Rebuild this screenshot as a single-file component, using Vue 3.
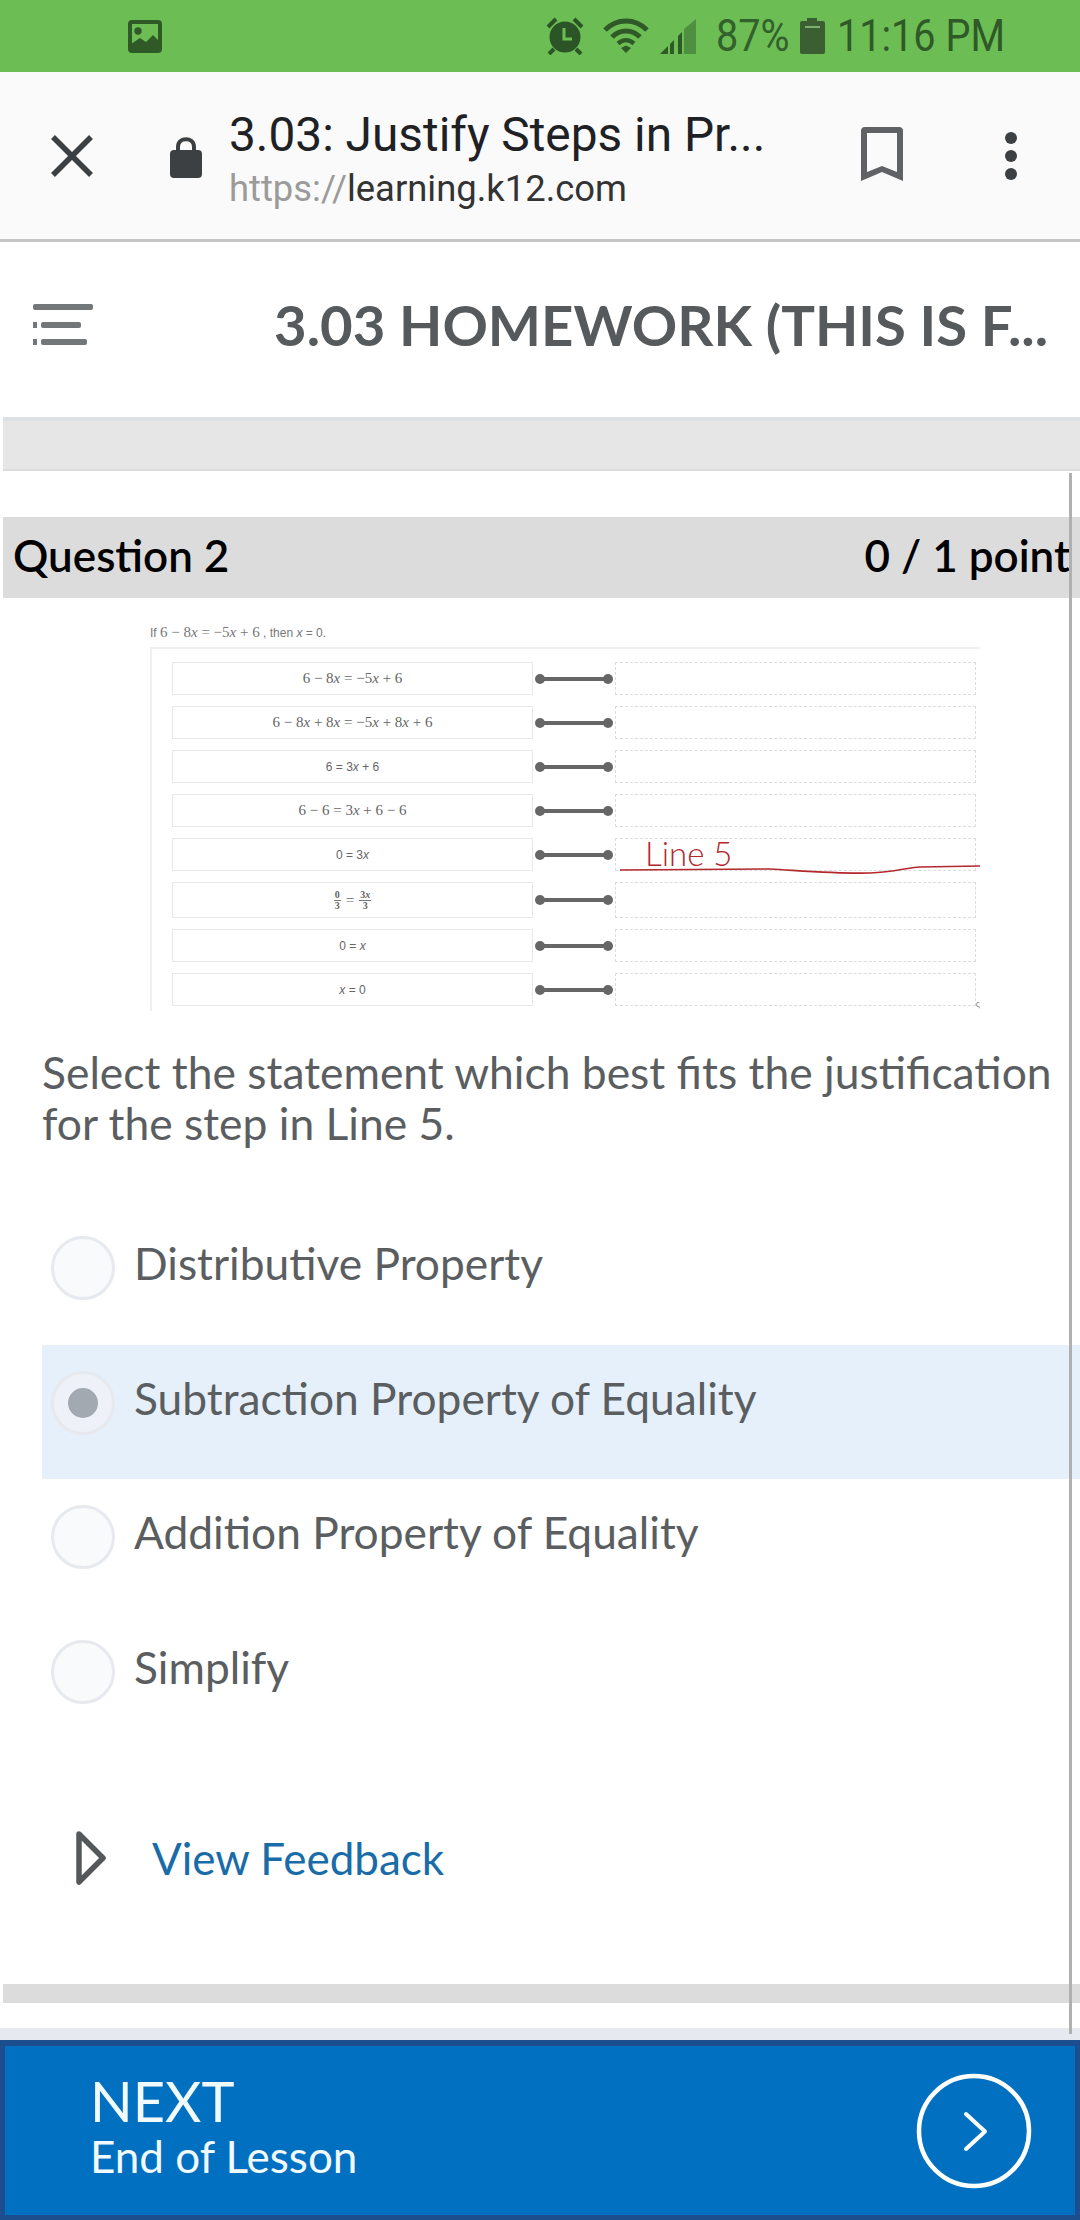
<script setup>
const rows = [
  { kind: 'math', text: '6 − 8x = −5x + 6' },
  { kind: 'math', text: '6 − 8x + 8x = −5x + 8x + 6' },
  { kind: 'plain', text: '6 = 3x + 6' },
  { kind: 'math', text: '6 − 6 = 3x + 6 − 6' },
  { kind: 'plain', text: '0 = 3x' },
  { kind: 'frac' },
  { kind: 'plain', text: '0 = x' },
  { kind: 'plain', text: 'x = 0' }
]

const options = [
  { label: 'Distributive Property', selected: false },
  { label: 'Subtraction Property of Equality', selected: true },
  { label: 'Addition Property of Equality', selected: false },
  { label: 'Simplify', selected: false }
]
</script>

<template>
  <div class="page">
    <div class="status">
      <svg width="34" height="33" viewBox="0 0 34 33">
        <rect x="2" y="2" width="30" height="29" rx="2" fill="none" stroke="#2f5a28" stroke-width="4" />
        <circle cx="10" cy="11" r="3.7" fill="#2f5a28" />
        <path d="M3 31 V24 L12 18 L18 22 L25 15 L31 21 V31 Z" fill="#2f5a28" />
      </svg>
      <div class="status-right">
        <svg width="38" height="38" viewBox="0 0 38 38">
          <circle cx="19" cy="20" r="15.5" fill="#2b5526" />
          <path d="M18 11 V22 H26" fill="none" stroke="#6dbd55" stroke-width="3" />
          <path d="M2 10 L10 2 M36 10 L28 2 M8 32 L3 37 M30 32 L35 37" stroke="#2b5526" stroke-width="4" />
        </svg>
        <svg class="ic-wifi" width="46" height="36" viewBox="0 0 46 36">
          <path d="M2 12 C14 0 32 0 44 12" fill="none" stroke="#2f5a28" stroke-width="5" />
          <path d="M9 19 C17 11 29 11 37 19" fill="none" stroke="#2f5a28" stroke-width="5" />
          <path d="M15 25.5 C20 21 26 21 31 25.5" fill="none" stroke="#2f5a28" stroke-width="4.5" />
          <path d="M18 30 L23 27.5 L28 30 L23 35 Z" fill="#2f5a28" />
        </svg>
        <svg class="ic-signal" width="36" height="36" viewBox="0 0 36 36">
          <path d="M24 11 L36 1 V36 H24 Z" fill="#4f8f40" />
          <path d="M0 36 L8 28 V36 Z" fill="#2f5a28" />
          <path d="M10 26 L14 22 V36 H10 Z" fill="#2f5a28" />
          <path d="M18 18 L22 14 V36 H18 Z" fill="#2f5a28" />
        </svg>
        <span class="pct">87%</span>
        <svg class="ic-battery" width="25" height="36" viewBox="0 0 25 36">
          <path d="M7 0 H17 V3 H23 Q25 3 25 5 V34 Q25 36 23 36 H2 Q0 36 0 34 V5 Q0 3 2 3 H7 Z" fill="#3b5f33" />
          <rect x="5" y="8" width="15" height="2" fill="#7fae72" />
        </svg>
        <span class="clock">11:16 PM</span>
      </div>
    </div>

    <div class="browser">
      <svg class="ic-close" width="42" height="42" viewBox="0 0 42 42">
        <path d="M2 2 L40 40 M40 2 L2 40" stroke="#3c4043" stroke-width="5.5" />
      </svg>
      <svg class="ic-lock" width="32" height="42" viewBox="0 0 32 42">
        <path d="M8 17 V11 C8 0.5 24 0.5 24 11 V17" fill="none" stroke="#3c4043" stroke-width="4" />
        <rect x="0" y="14" width="32" height="28" rx="4" fill="#3c4043" />
      </svg>
      <div class="browser-text">
        <div class="tab-title">3.03: Justify Steps in Pr...</div>
        <div class="tab-url"><span class="scheme">https://</span>learning.k12.com</div>
      </div>
      <svg class="ic-bookmark" width="42" height="54" viewBox="0 0 42 54">
        <path fill-rule="evenodd" d="M0 4 Q0 0 4 0 H38 Q42 0 42 4 V54 L21 45 L0 54 Z M6 6 V45 L21 39 L36 45 V6 Z" fill="#5f6164" />
      </svg>
      <div class="kebab"><i></i><i></i><i></i></div>
    </div>

    <div class="content">
      <header class="lesson-head">
        <svg class="ic-menu" width="60" height="42" viewBox="0 0 60 42">
          <rect x="0" y="0" width="60" height="6" rx="2" fill="#73777a" />
          <rect x="0" y="18" width="4" height="6" fill="#73777a" />
          <rect x="8" y="18" width="40" height="6" rx="2" fill="#73777a" />
          <rect x="0" y="35" width="4" height="6" fill="#73777a" />
          <rect x="8" y="35" width="46" height="6" rx="2" fill="#73777a" />
        </svg>
        <h1>3.03 HOMEWORK (THIS IS F...</h1>
      </header>
      <div class="band"></div>

      <div class="q-bar">
        <span>Question 2</span>
        <span>0 / 1 point</span>
      </div>

      <div class="figure">
        <p class="prompt">If <span class="cm">6 − 8<em>x</em> = −5<em>x</em> + 6</span> , then <em>x</em> = 0.</p>
        <div class="match">
          <div v-for="(row, i) in rows" :key="i" class="match-row" :class="{ tall: row.kind === 'frac' }">
            <div class="step">
              <span v-if="row.kind !== 'frac'" :class="{ cm: row.kind === 'math' }">
                <template v-for="(part, j) in row.text.split('x')" :key="j"><em v-if="j > 0">x</em>{{ part }}</template>
              </span>
              <span v-else class="cm frac-line">
                <span class="frac"><b>0</b><b>3</b></span>
                <span>=</span>
                <span class="frac"><b>3<em>x</em></b><b>3</b></span>
              </span>
            </div>
            <div class="link"><i></i><span></span><i></i></div>
            <div class="slot"></div>
          </div>
          <span class="corner">ς</span>
          <div class="note">
            <span class="note-text">Line 5</span>
            <svg width="360" height="12" viewBox="0 0 360 12">
              <path d="M0 8 L150 7 C185 9 220 12 250 11 C275 10 285 6 300 5 L360 4" fill="none" stroke="#b3282d" stroke-width="1.6" />
            </svg>
          </div>
        </div>
      </div>

      <p class="question">Select the statement which best fits the justification<br />for the step in Line 5.</p>

      <div class="options">
        <div v-for="opt in options" :key="opt.label" class="option" :class="{ selected: opt.selected }">
          <span class="radio"><i v-if="opt.selected"></i></span>
          <span class="opt-label">{{ opt.label }}</span>
        </div>
      </div>

      <div class="feedback">
        <svg width="30" height="54" viewBox="0 0 30 54">
          <path d="M3 3 L27 27 L3 51 Z" fill="none" stroke="#55585a" stroke-width="5.5" stroke-linejoin="round" />
        </svg>
        <a>View Feedback</a>
      </div>

      <div class="bottom-rule"></div>
    </div>

    <div class="pre-footer"></div>
    <footer class="next">
      <div class="next-text">
        <div class="next-title">NEXT</div>
        <div class="next-sub">End of Lesson</div>
      </div>
      <svg width="116" height="116" viewBox="0 0 116 116">
        <circle cx="58" cy="58" r="55" fill="none" stroke="#fff" stroke-width="4.5" />
        <path d="M50 41 L69 58.5 L50 76" fill="none" stroke="#fff" stroke-width="4" stroke-linecap="round" stroke-linejoin="round" />
      </svg>
    </footer>

    <div class="scrollbar"></div>
  </div>
</template>

<style>
html,
body {
  margin: 0;
  background: #fff;
}
</style>

<style scoped>
.page {
  position: relative;
  width: 1080px;
  height: 2220px;
  overflow: hidden;
  display: flex;
  flex-direction: column;
  font-family: Lato, "Liberation Sans", sans-serif;
  font-feature-settings: "liga" 1;
  color: #5a5e61;
  background: #fff;
}

.status {
  height: 72px;
  flex: none;
  background: #6dbd55;
  display: flex;
  align-items: center;
  justify-content: space-between;
  padding: 0 78px 0 128px;
  box-sizing: border-box;
  font-family: Roboto, sans-serif;
  color: #2f5a28;
}

.status-right {
  display: flex;
  align-items: center;
}

.ic-wifi {
  margin-left: 19px;
}

.ic-signal {
  margin-left: 11px;
}

.pct,
.clock {
  display: block;
  font-size: 45px;
  line-height: 50px;
  white-space: nowrap;
  transform: scaleX(0.88);
  transform-origin: left center;
}

.pct {
  width: 71px;
  margin-left: 20px;
  opacity: 0.92;
}

.ic-battery {
  margin-left: 13px;
}

.clock {
  width: 165px;
  margin-left: 12px;
}

.browser {
  height: 170px;
  flex: none;
  box-sizing: border-box;
  background: #fafafa;
  border-bottom: 3px solid #c6c6c6;
  display: flex;
  align-items: center;
  font-family: Roboto, sans-serif;
}

.ic-close {
  margin-left: 51px;
  margin-top: 1px;
}

.ic-lock {
  margin-left: 77px;
  margin-top: 2px;
}

.browser-text {
  margin-left: 27px;
  width: 632px;
  margin-top: 4px;
}

.tab-title {
  font-size: 47.8px;
  line-height: 62px;
  color: #202124;
}

.tab-url {
  font-size: 36.4px;
  line-height: 46px;
  color: #333;
}

.scheme {
  color: #9b9b9b;
}

.ic-bookmark {
  margin-top: -4px;
}

.kebab {
  margin-left: 102px;
  margin-top: 0;
  display: flex;
  flex-direction: column;
  gap: 6px;
}

.kebab i {
  width: 12px;
  height: 12px;
  border-radius: 50%;
  background: #3c4043;
}

.content {
  flex: none;
  margin-left: 3px;
  height: 1787px;
}

.lesson-head {
  height: 175px;
  box-sizing: border-box;
  display: flex;
  align-items: center;
  padding: 0 0 9px 30px;
}

.ic-menu {
  flex: none;
}

.lesson-head h1 {
  margin: 0 0 2px 181px;
  font-size: 56.3px;
  font-weight: 700;
  color: #565a5c;
  white-space: nowrap;
}

.band {
  height: 48px;
  background: #e6e6e6;
  border-top: 4px solid #dde1e6;
  border-bottom: 2px solid #dcdcdc;
}

.q-bar {
  margin-top: 46px;
  height: 81px;
  box-sizing: border-box;
  background: #dcdcdc;
  display: flex;
  align-items: center;
  justify-content: space-between;
  padding: 0 10px 6px 10px;
  font-size: 44px;
  font-weight: 600;
  color: #000;
}

.figure {
  margin-left: 147px;
  width: 830px;
}

.prompt {
  margin: 0;
  height: 49px;
  box-sizing: border-box;
  padding-top: 24px;
  font: 12px/20px "Liberation Sans", sans-serif;
  color: #777;
}

.cm {
  font-family: "Liberation Serif", serif;
  font-size: 15px;
}

.match {
  position: relative;
  height: 364px;
  box-sizing: border-box;
  border-top: 2px solid #efefef;
  border-left: 2px solid #efefef;
  padding: 13px 0 0 20px;
  display: flex;
  flex-direction: column;
  gap: 11px;
  font: 12px "Liberation Sans", sans-serif;
  color: #666;
}

.match-row {
  height: 33px;
  flex: none;
  display: grid;
  grid-template-columns: 361px 82px 361px;
}

.match-row.tall {
  height: 36px;
}

.step {
  border: 1px solid #e8e8e8;
  display: flex;
  align-items: center;
  justify-content: center;
}

.link {
  display: flex;
  align-items: center;
  padding: 0 2px 0 2px;
}

.link i {
  flex: none;
  width: 10px;
  height: 10px;
  border-radius: 50%;
  background: #666;
}

.link span {
  flex: 1;
  height: 4px;
  margin: 0 -2px;
  background: #666;
}

.slot {
  border: 1px dashed #dcdcdc;
}

.frac-line {
  display: flex;
  align-items: center;
  gap: 5px;
}

.frac {
  display: inline-flex;
  flex-direction: column;
  align-items: center;
  font-size: 10px;
  line-height: 10px;
}

.frac b:first-child {
  border-bottom: 1px solid #777;
  padding: 0 1px;
}

.corner {
  position: absolute;
  right: 0;
  bottom: 2px;
  font-size: 9px;
  color: #888;
}

.note {
  position: absolute;
  left: 468px;
  top: 189px;
  width: 360px;
  height: 36px;
}

.note-text {
  position: absolute;
  left: 25px;
  top: -3px;
  font: 300 33px/36px Lato, sans-serif;
  color: #b3282d;
  white-space: nowrap;
}

.note svg {
  position: absolute;
  left: 0;
  bottom: 0;
  display: block;
}

.question {
  margin: 35px 0 0 39px;
  font-size: 44.4px;
  line-height: 51px;
}

.options {
  margin-top: 62px;
  margin-left: 39px;
}

.option {
  height: 134.5px;
  box-sizing: border-box;
  padding: 26px 0 0 9px;
  display: flex;
  align-items: flex-start;
}

.option.selected {
  background: #e6f0fb;
}

.radio {
  width: 64px;
  height: 64px;
  box-sizing: border-box;
  border: 3px solid #e6e9ee;
  border-radius: 50%;
  background: #f9fafc;
  display: flex;
  align-items: center;
  justify-content: center;
  flex: none;
}

.selected .radio {
  background: #eef2f8;
}

.radio i {
  width: 30px;
  height: 30px;
  border-radius: 50%;
  background: #a2a9b1;
}

.opt-label {
  margin-left: 19px;
  font-size: 44.3px;
  line-height: 54px;
}

.feedback {
  margin-top: 83px;
  margin-left: 73px;
  display: flex;
  align-items: center;
  height: 54px;
}

.feedback a {
  margin-left: 46px;
  font-size: 44px;
  color: #1a6ca8;
}

.bottom-rule {
  margin-top: 99px;
  height: 19px;
  background: #dcdcdc;
}

.pre-footer {
  flex: none;
  height: 12px;
  background: #e6e9f0;
  margin-top: -1px;
}

.next {
  flex: 1;
  box-sizing: border-box;
  background: #0270c0;
  border: 5px solid #1c4e8e;
  border-top-width: 6px;
  display: flex;
  align-items: center;
  justify-content: space-between;
  padding: 0 43px 0 85px;
  color: #f0faff;
}

.next-text {
  margin-top: -10px;
}

.next-title {
  font-size: 56px;
  line-height: 60px;
}

.next-sub {
  font-size: 44px;
  line-height: 50px;
}

.scrollbar {
  position: absolute;
  left: 1069px;
  top: 473px;
  width: 3px;
  height: 1561px;
  background: #b0b0b0;
}
</style>
